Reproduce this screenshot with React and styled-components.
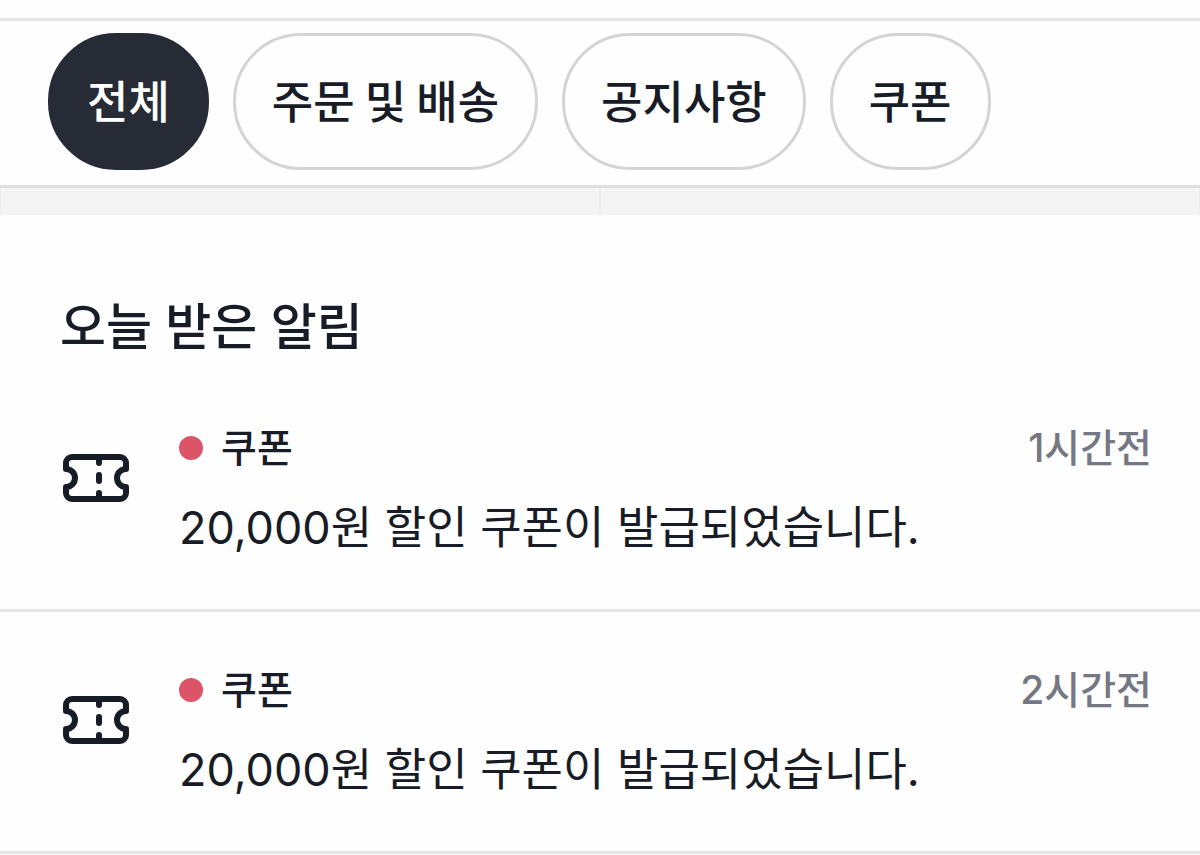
import React, { useState } from 'react';
import styled, { createGlobalStyle } from 'styled-components';

const TABS = ['전체', '주문 및 배송', '공지사항', '쿠폰'];

const NOTICES = [
    { id: 1, type: '쿠폰', time: '1시간전', message: '20,000원 할인 쿠폰이 발급되었습니다.' },
    { id: 2, type: '쿠폰', time: '2시간전', message: '20,000원 할인 쿠폰이 발급되었습니다.' },
];

const TicketIcon = () => (
    <Icon viewBox="0 0 66 48" aria-hidden="true">
        <path d="M9 3H57A6 6 0 0 1 63 9V15A9 9 0 0 0 63 33V39A6 6 0 0 1 57 45H9A6 6 0 0 1 3 39V33A9 9 0 0 0 3 15V9A6 6 0 0 1 9 3Z" />
        <path d="M36 4V9M36 21V27M36 39V44" />
    </Icon>
);

const App = () => {
    const [selected, setSelected] = useState('전체');
    const notices = NOTICES.filter((notice) => selected === '전체' || notice.type === selected);

    return (
        <>
            <GlobalStyle />
            <TopBar />
            <TabBar>
                {TABS.map((tab) => (
                    <Tab
                        key={tab}
                        type="button"
                        $active={tab === selected}
                        aria-pressed={tab === selected}
                        onClick={() => setSelected(tab)}
                    >
                        {tab}
                    </Tab>
                ))}
            </TabBar>
            <Divider>
                <DividerCell />
                <DividerCell />
            </Divider>
            <main>
                <Title>오늘 받은 알림</Title>
                <NoticeList>
                    {notices.map((notice) => (
                        <Notice key={notice.id}>
                            <TicketIcon />
                            <NoticeBody>
                                <NoticeHead>
                                    <Dot />
                                    <NoticeType>{notice.type}</NoticeType>
                                    <Time>{notice.time}</Time>
                                </NoticeHead>
                                <Message>{notice.message}</Message>
                            </NoticeBody>
                        </Notice>
                    ))}
                </NoticeList>
            </main>
        </>
    );
};

const GlobalStyle = createGlobalStyle`
    * {
        box-sizing: border-box;
    }

    body {
        margin: 0;
        background-color: #fefefe;
        color: #181c26;
        font-family: Inter, 'Noto Sans CJK KR', sans-serif;
    }
`

const TopBar = styled.header`
    height: 21px;
    border-bottom: 3px solid #e6e6e6;
`

const TabBar = styled.nav`
    display: flex;
    gap: 24px;
    padding: 12px 48px 15px;
    border-bottom: 3px solid #e0e0e2;
`

const Tab = styled.button`
    padding: 31px 36px 35px;
    border: 3px solid ${({ $active }) => ($active ? '#272b36' : '#d4d4d8')};
    border-radius: 68px;
    background-color: ${({ $active }) => ($active ? '#272b36' : 'transparent')};
    color: ${({ $active }) => ($active ? '#ffffff' : '#181c26')};
    font-family: 'Noto Sans CJK KR', sans-serif;
    font-size: 45px;
    font-weight: 500;
    line-height: 65px;
    white-space: nowrap;
    cursor: pointer;
`

const Divider = styled.div`
    display: grid;
    grid-template-columns: 1fr 1fr;
    height: 27px;
    background-color: #f4f4f4;
`

const DividerCell = styled.div`
    border: 1px solid #ebecee;
    border-width: 0 1px;
`

const Title = styled.h1`
    margin: 0;
    padding: 76px 60px 60px;
    font-size: 50px;
    font-weight: 500;
    line-height: 72px;
`

const NoticeList = styled.ul`
    margin: 0;
    padding: 0;
    list-style: none;
`

const Notice = styled.li`
    display: flex;
    align-items: flex-start;
    gap: 50px;
    padding: 0 48px 49px 63px;
    border-bottom: 3px solid #e5e5e5;

    & + & {
        padding-top: 53px;
    }
`

const Icon = styled.svg`
    flex: none;
    width: 66px;
    height: 48px;
    margin-top: 31px;
    fill: none;
    stroke: #181c26;
    stroke-width: 6;
    stroke-linecap: round;
    stroke-linejoin: round;
`

const NoticeBody = styled.div`
    flex: 1;
`

const NoticeHead = styled.div`
    display: flex;
    align-items: center;
    font-size: 39px;
    font-weight: 500;
    line-height: 50px;
`

const Dot = styled.span`
    width: 24px;
    height: 24px;
    margin-right: 18px;
    border-radius: 50%;
    background-color: #dc5468;
`

const NoticeType = styled.span`
    color: #181c26;
`

const Time = styled.time`
    margin-left: auto;
    color: #757882;
`

const Message = styled.p`
    margin: 22px 0 0;
    font-size: 45px;
    line-height: 65px;
`

export default App;
